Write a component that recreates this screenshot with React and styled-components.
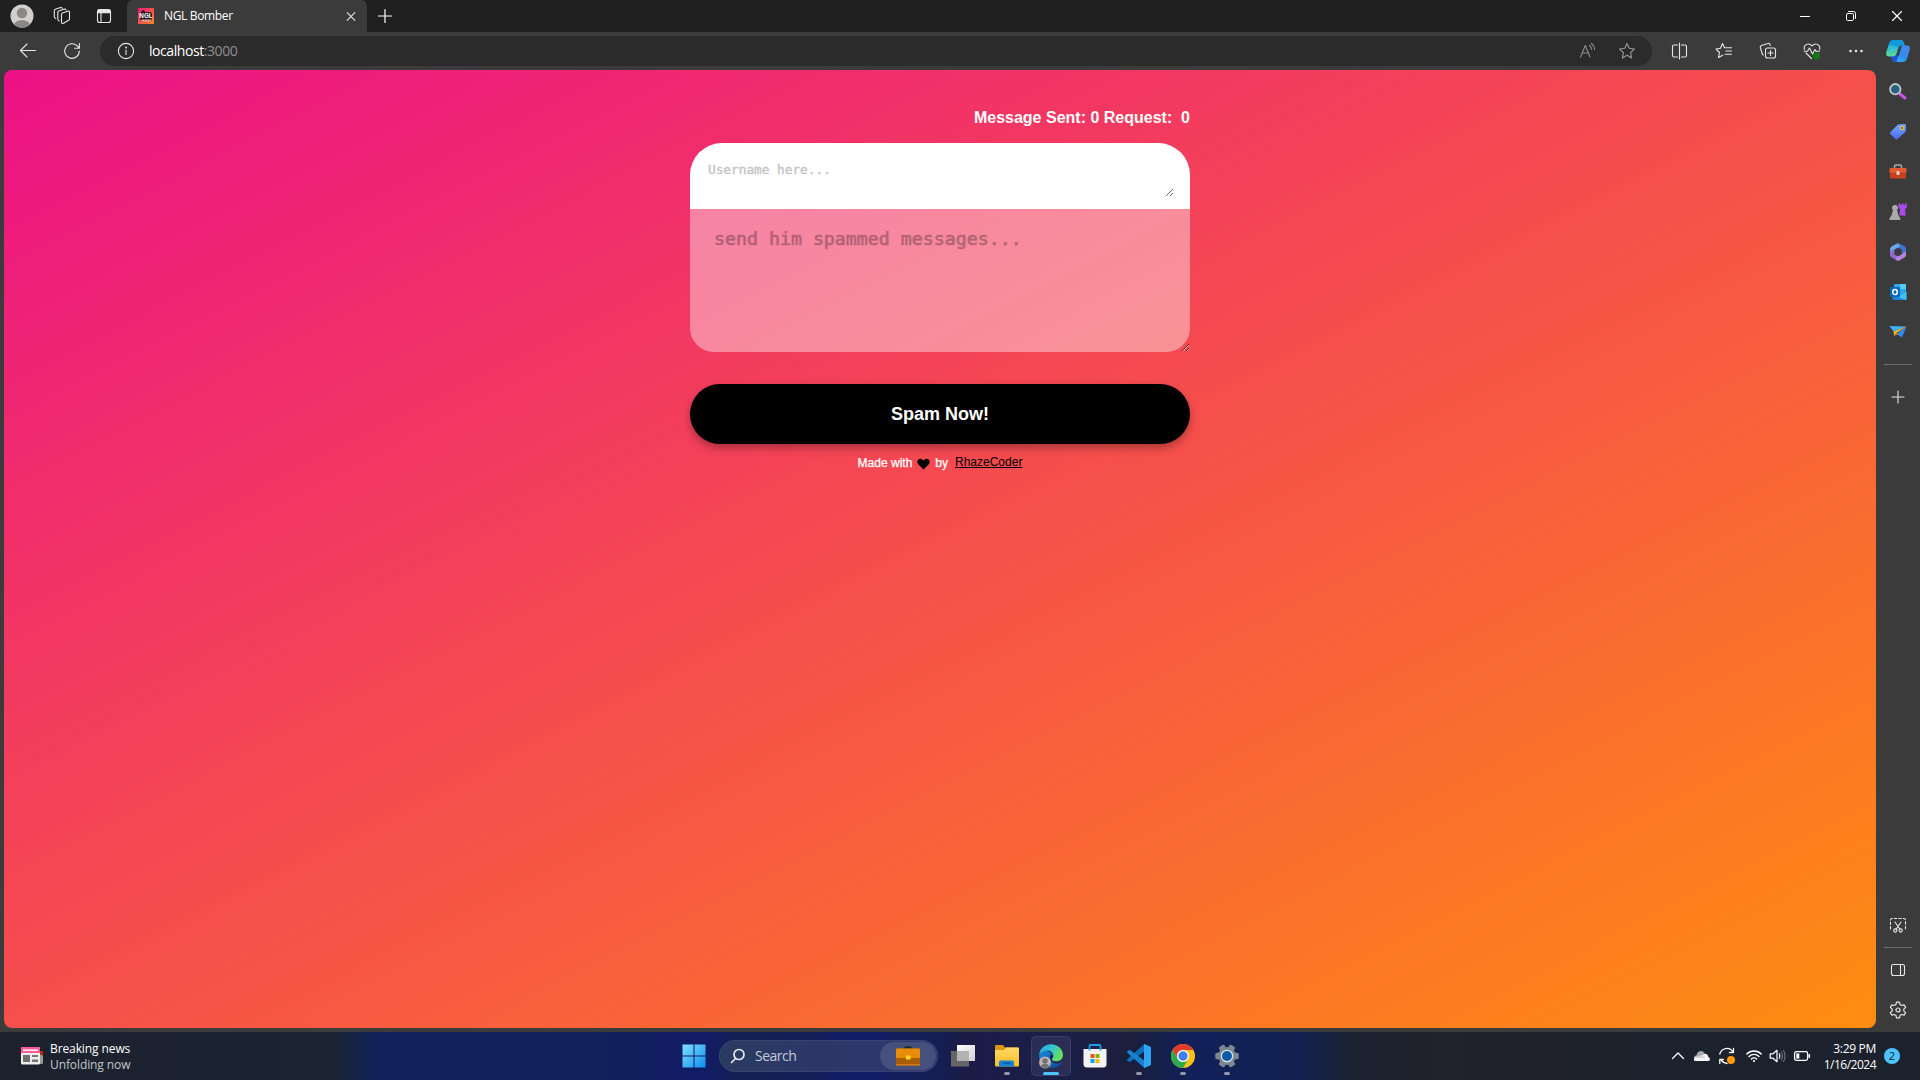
import React from "react";
import styled, { createGlobalStyle } from "styled-components";

const GlobalStyle = createGlobalStyle`
  * { box-sizing: border-box; }
  html, body { margin: 0; padding: 0; background: #3b3b3b; overflow: hidden; }
`;

const Desktop = styled.div`
  width: 1920px;
  height: 1080px;
  display: flex;
  flex-direction: column;
  font-family: "Open Sans", "Noto Sans", sans-serif;
  color: #fff;
  overflow: hidden;
`;

/* ---------- browser chrome ---------- */
const TitleBar = styled.header`
  height: 32px;
  display: flex;
  background: #202020;
`;
const IconSlot = styled.div`
  width: ${(p) => p.$w}px;
  height: ${(p) => p.$h || 32}px;
  flex: none;
  display: flex;
  align-items: center;
  justify-content: center;
`;
const Tab = styled.div`
  width: 240px;
  height: 32px;
  display: flex;
  align-items: center;
  padding: 0 8px 0 11px;
  background: #3b3b3b;
  border-radius: 6px 6px 0 0;
`;
const TabTitle = styled.span`
  flex: 1;
  margin-left: 10px;
  font-size: 12px;
  line-height: 16px;
  letter-spacing: -0.35px;
`;
const Spacer = styled.div`
  flex: 1;
`;
const Toolbar = styled.div`
  height: 38px;
  display: flex;
  align-items: center;
  background: #3b3b3b;
`;
const AddressBar = styled.div`
  width: 1552px;
  height: 30px;
  display: flex;
  align-items: center;
  padding: 0 5px 0 6px;
  border-radius: 15px;
  background: #2b2b2b;
`;
const Url = styled.span`
  flex: 1;
  margin-left: 3px;
  font-size: 14px;
  line-height: 20px;
  letter-spacing: -0.43px;
  color: #fff;
`;
const Port = styled.span`
  color: #8f8f8f;
`;
const Middle = styled.div`
  height: 962px;
  display: flex;
  padding: 0 0 4px 4px;
  background: #3b3b3b;
`;
const SideBar = styled.aside`
  width: 44px;
  display: flex;
  flex-direction: column;
  align-items: center;
  padding-top: 2px;
  margin-bottom: -2px;
`;
const Rule = styled.div`
  width: 28px;
  height: 1px;
  flex: none;
  margin: ${(p) => p.$m};
  background: #6c6c6c;
`;

/* ---------- page ---------- */
const Page = styled.main`
  width: 1872px;
  height: 958px;
  display: flex;
  flex-direction: column;
  align-items: center;
  border-radius: 8px;
  background: linear-gradient(to bottom right, #ec1187 0%, #ff8d10 100%);
  font-family: "Liberation Sans", Arial, sans-serif;
`;
const Column = styled.div`
  width: 500px;
  display: flex;
  flex-direction: column;
`;
const Counters = styled.div`
  height: 73px;
  padding-top: 38px;
  text-align: right;
  font-size: 16px;
  line-height: 20px;
  font-weight: 700;
  white-space: pre;
`;
const UserBox = styled.div`
  height: 66px;
  padding: 16px;
  border-radius: 32px 32px 0 0;
  background: #fff;
`;
const Field = styled.textarea`
  display: block;
  width: 100%;
  border: none;
  outline: none;
  background: transparent;
  font-family: "DejaVu Sans Mono", monospace;
`;
const UserField = styled(Field)`
  height: 38px;
  padding: 3px 2px 2px;
  font-size: 12.75px;
  line-height: 16px;
  -webkit-text-stroke: 0.35px #c4c4c4;
  &::placeholder { color: #c4c4c4; }
`;
const MessageField = styled(Field)`
  height: 143px;
  padding: 18px 24px;
  font-size: 18.25px;
  line-height: 24px;
  border-radius: 0 0 24px 24px;
  background: rgba(255, 255, 255, 0.4);
  &::placeholder {
    color: #000;
    opacity: 0.27;
    -webkit-text-stroke: 0.7px #000;
  }
`;
const SpamButton = styled.button`
  height: 60px;
  margin-top: 32px;
  border: none;
  border-radius: 30px;
  background: #000;
  color: #fff;
  font: 700 18px "Liberation Sans", Arial, sans-serif;
  box-shadow: 0 4px 8px rgba(0, 0, 0, 0.3);
`;
const Credit = styled.div`
  display: flex;
  justify-content: center;
  align-items: center;
  height: 16px;
  margin-top: 11px;
  font-size: 12px;
  line-height: 16px;
  -webkit-text-stroke: 0.25px currentColor;
`;
const Heart = styled.svg`
  margin: 1px 5px 0 5px;
`;
const Author = styled.a`
  margin: -2px 0 0 7px;
  color: #000;
  text-decoration: underline;
  -webkit-text-stroke: 0;
`;

/* ---------- taskbar ---------- */
const TaskBar = styled.footer`
  height: 48px;
  display: grid;
  grid-template-columns: 672px 577px 1fr;
  background: linear-gradient(
    90deg,
    #1c212d 0, #1b2431 330px, #11235a 378px, #11215a 600px, #121b66 700px,
    #122052 745px, #121f55 800px, #111d68 860px, #141e55 930px, #1b1b46 970px,
    #1a1f4a 1050px, #1b1e3c 1130px, #11205a 1190px, #11204f 1300px,
    #1b2230 1355px, #20222c 1440px, #1b212d 1700px
  );
`;
const News = styled.div`
  display: flex;
  align-items: center;
  padding-left: 20px;
`;
const NewsText = styled.div`
  margin-left: 6px;
  padding-top: 2px;
  font-size: 12px;
  line-height: 16px;
  letter-spacing: -0.1px;
`;
const Dim = styled.div`
  color: #c3c6cb;
`;
const Apps = styled.nav`
  display: flex;
  align-items: center;
`;
const AppSlot = styled.div`
  width: ${(p) => p.$w || 44}px;
  height: 48px;
  flex: none;
  display: flex;
  align-items: center;
  justify-content: center;
  position: relative;
`;
const ActivePlate = styled.div`
  width: 40px;
  height: 40px;
  display: flex;
  align-items: center;
  justify-content: center;
  border-radius: 5px;
  border: 1px solid rgba(255, 255, 255, 0.08);
  background: rgba(255, 255, 255, 0.07);
`;
const Running = styled.i`
  position: absolute;
  bottom: 5px;
  width: ${(p) => (p.$active ? 16 : 6)}px;
  height: 3px;
  border-radius: 2px;
  background: ${(p) => (p.$active ? "#4cc2ff" : "#9497a8")};
`;
const SearchBox = styled.div`
  width: 219px;
  height: 32px;
  flex: none;
  display: flex;
  align-items: center;
  margin: 0 3px 0 3px;
  padding: 0 1px 0 10px;
  border-radius: 16px;
  border: 1px solid rgba(255, 255, 255, 0.06);
  background: linear-gradient(90deg, #2a3b60, #2c3768 45%, #30376f);
`;
const SearchLabel = styled.span`
  flex: 1;
  margin-left: 9px;
  font-size: 14px;
  line-height: 20px;
  letter-spacing: -0.5px;
  color: #c5cad8;
`;
const SearchHighlight = styled.div`
  width: 56px;
  height: 28px;
  display: flex;
  align-items: center;
  justify-content: center;
  border-radius: 14px;
  background: #46507c;
`;
const Tray = styled.div`
  display: flex;
  align-items: center;
  justify-content: flex-end;
  padding-right: 20px;
`;
const Clock = styled.div`
  width: 62px;
  padding-top: 1px;
  text-align: right;
  font-size: 12px;
  line-height: 16px;
  letter-spacing: ${(p) => p.$track || -0.3}px;
  white-space: nowrap;
`;
const DateLine = styled.div`
  letter-spacing: -0.5px;
`;
const Badge = styled.div`
  width: 16px;
  height: 16px;
  margin-left: 8px;
  border-radius: 50%;
  background: #4cc2ff;
  color: #10202c;
  font-size: 11px;
  line-height: 16px;
  text-align: center;
`;

/* ---------- drawings ---------- */
const Line = ({ s = 20, c = "#e6e6e6", w = 1.1, children }) => (
  <svg width={s} height={s} viewBox={`0 0 ${s} ${s}`} fill="none" stroke={c} strokeWidth={w} strokeLinecap="round" strokeLinejoin="round">
    {children}
  </svg>
);
const Art = ({ w = 20, h = 20, children }) => (
  <svg width={w} height={h} viewBox={`0 0 ${w} ${h}`}>{children}</svg>
);

const Avatar = () => (
  <Art w={24} h={24}>
    <clipPath id="av"><circle cx="12" cy="12" r="11.5" /></clipPath>
    <circle cx="12" cy="12" r="11.5" fill="#d2d0ce" />
    <g clipPath="url(#av)" fill="#8b8886">
      <circle cx="12" cy="9" r="5.2" />
      <ellipse cx="12" cy="21.5" rx="8" ry="5.6" />
    </g>
  </Art>
);
const Workspaces = () => (
  <Line s={20}>
    <path d="M9.500 8.300Q9.500 7.300 10.400 7L15.800 5.200Q17.500 4.800 17.500 6.300V12.800Q17.500 13.800 16.600 14.200L11.500 17.300Q9.500 18 9.500 16.200z" />
    <path d="M7.300 15Q5.800 14.500 5.800 13V6.500Q5.800 5.300 6.900 4.900L12.500 3.100Q13.700 2.900 14 3.900" />
    <path d="M3.700 12.500Q2.300 12 2.300 10.500V5Q2.300 3.600 3.400 3.200L8.500 1.600Q9.700 1.400 10.200 2.300" />
  </Line>
);
const TabActions = () => (
  <Line s={20}>
    <rect x="3.500" y="3.500" width="13" height="13" rx="2" />
    <path d="M4 5.500h12" strokeWidth="3.500" strokeLinecap="butt" />
    <path d="M7 7v9" />
  </Line>
);
const Favicon = () => (
  <svg width="16" height="16" viewBox="0 0 16 16">
    <defs>
      <linearGradient id="fv" x1="0" y1="0" x2="1" y2="1">
        <stop offset="0" stopColor="#ec1b7c" />
        <stop offset="1" stopColor="#f98320" />
      </linearGradient>
    </defs>
    <rect width="16" height="16" fill="url(#fv)" />
    <path d="M2 5 5 2h1l1 2h6l1 2v4l-1 3H3L2 10z" fill="#2c1520" />
    <text x="8" y="9.800" textAnchor="middle" fontFamily="Liberation Sans, sans-serif" fontWeight="700" fontSize="6.300" fill="#fff">NGL</text>
    <path d="M3.500 12.300h9.500" stroke="#f5d9d4" strokeWidth="1.800" strokeDasharray="1.200 .4" />
  </svg>
);
const starPath = "M10 2.600 12.200 7.300 17.400 8 13.600 11.600 14.600 16.900 10 14.300 5.400 16.900 6.400 11.600 2.600 8 7.800 7.300z";
const Copilot = () => (
  <Art w={26} h={24}>
    <defs>
      <linearGradient id="cpA" x1="0" y1="0" x2="0" y2="1">
        <stop offset="0" stopColor="#12a4e6" /><stop offset=".5" stopColor="#2fc0cf" /><stop offset="1" stopColor="#62dd8c" />
      </linearGradient>
      <linearGradient id="cpB" x1="1" y1="0" x2="0" y2="1">
        <stop offset="0" stopColor="#4a86e8" /><stop offset=".5" stopColor="#2f8df0" /><stop offset="1" stopColor="#27c3f3" />
      </linearGradient>
    </defs>
    <path d="M8.500 1h7.500q2 0 3 3l.6 2.500H16q-2 0-2.700 2.500L11.500 15q-.7 2.500-3 2.500H4q-3.500 0-2.800-4L4 4.500Q5 1 8.500 1z" fill="url(#cpA)" />
    <path d="M8.500 1h7.500q2 0 3 3l.6 2.500H16q-2 0-2.700 2.500l-1-1.500L7 6q-2 0-3.500 1L4.300 4Q5.300 1 8.500 1z" fill="#109ade" />
    <path d="M17.500 23H10q-2 0-3-3l-.6-2.500H8.500q2.300 0 3-2.500l1.800-6q.7-2.500 2.700-2.500h6q3.500 0 2.800 4L22 19.500Q21 23 17.500 23z" fill="url(#cpB)" />
    <path d="M11.500 15l1.800-6q.7-2.500 2.700-2.500h1L13.800 17.500H9.500q1.500-.6 2-2.500z" fill="#3a4450" />
    <path d="M6.400 17.500h2.100q2.300 0 3-2.500l1.500 2.500-1.500 5.500H10q-2 0-3-3z" fill="#2153d8" />
  </Art>
);

const Lens = () => (
  <Art>
    <path d="M12 12l5 4" stroke="#c852ea" strokeWidth="3" strokeLinecap="round" />
    <circle cx="7.300" cy="7.200" r="5.200" fill="#28617f" stroke="#c3c7ca" strokeWidth="1.800" />
  </Art>
);
const Tag = () => (
  <Art>
    <defs><linearGradient id="tg" x1="0" y1="0" x2="0" y2="1"><stop offset="0" stopColor="#74a7ff" /><stop offset="1" stopColor="#4a6af4" /></linearGradient></defs>
    <path d="M10 2.500 16.500 2q1.500 0 1.500 1.500L17.800 9.500 9.500 17q-1 1-2 0L2.500 12q-1-1 0-2z" fill="url(#tg)" />
    <circle cx="14" cy="6" r="1.700" fill="#3a55a8" stroke="#f5c82a" strokeWidth="1.300" />
  </Art>
);
const Toolbox = () => (
  <Art>
    <path d="M6.500 7V4.500q0-1.500 1.500-1.500h4q1.500 0 1.500 1.500V7" fill="none" stroke="#a5a8aa" strokeWidth="1.500" />
    <rect x="1.500" y="6" width="17" height="5" rx="1" fill="#e65a2f" />
    <rect x="2" y="10.500" width="16" height="6" rx="1" fill="#c9401f" />
    <rect x="8.500" y="9" width="3" height="4" rx="1" fill="#d7dadb" />
  </Art>
);
const Chess = () => (
  <Art>
    <path d="M10.500 1.500h2V3h1.300V1.500h1.800V3h1.300V1.500h1.900v4l-1.800 1.500.8 6.500H11.500L12 7 10.500 5.500z" fill="#a94bea" />
    <path d="M7 3a2.800 2.800 0 0 1 2 5l1.500 5.500 1.700 2.500v2H1.500v-2l2-2.500L5 8a2.800 2.800 0 0 1 2-5z" fill="#a9a9a9" />
  </Art>
);
const M365 = () => (
  <Art>
    <path d="M9.500 1.300Q10.500 1 11.500 1.500L16.500 4.300Q18 5 18 6.500V11L13.500 13V7.500L8 4.500z" fill="#3d72d2" />
    <path d="M9.500 1.300 3.500 4.500Q2 5.500 2 7V13L6.500 11V7.500L12.500 4.300z" fill="#6aa9e6" />
    <path d="M2 9V13Q2 14.500 3.300 15.300L8.500 18.300Q10 19 11.500 18.200L14 16.500 6.500 12.500V7.500z" fill="#8d6bd0" />
    <path d="M18 9V13.500Q18 14.500 16.800 15.300L11.500 18.300Q10 19 8.500 18.300L7.500 15.500 13.500 12.500z" fill="#b683de" />
    <path d="M6.500 7.800 10 6l3.500 1.800v4.400L10 14l-3.500-1.800z" fill="#3b3b3b" />
  </Art>
);
const Outlook = () => (
  <Art>
    <rect x="6" y="2" width="12" height="14" rx="1" fill="#2fa8ea" />
    <rect x="12" y="2" width="6" height="5" fill="#52cdf6" />
    <path d="M4.500 9.500 12 13.500 18.500 9.500V17q0 1-1 1h-12q-1 0-1-1z" fill="#1a86d8" />
    <path d="M18.500 9.500 10 15l7.500 3q1 0 1-1z" fill="#44bdf0" />
    <rect x="2" y="5" width="10" height="10" rx="1.200" fill="#0a66b8" />
    <ellipse cx="7" cy="10" rx="2.300" ry="2.600" fill="none" stroke="#fff" strokeWidth="1.500" />
  </Art>
);
const Plane = () => (
  <Art>
    <path d="M1.500 4 18.500 4.500 5.500 9.500z" fill="#3fb0f5" />
    <path d="M18.500 4.500 14 15.500 8.500 12z" fill="#2d8cf0" />
    <path d="M18.500 4.500 5.500 9.500 6 14 8.500 11z" fill="#f4b62a" />
    <path d="M6 14 8.500 11l1.800 1.300z" fill="#c98210" />
  </Art>
);
const GearLine = () => (
  <Line w={1.200}>
    <path d="M8.500 2.200h3l.6 2.400 1.600.9 2.400-.7 1.500 2.600-1.800 1.700v1.800l1.800 1.700-1.500 2.600-2.400-.7-1.600.9-.6 2.400h-3l-.6-2.400-1.600-.9-2.400.7-1.500-2.600 1.800-1.700V9.100L2.400 7.400l1.500-2.600 2.400.7 1.600-.9z" />
    <circle cx="10" cy="10" r="2" />
  </Line>
);

const NewsIcon = () => (
  <Art w={24} h={18}>
    <rect x="17" y="4" width="6" height="6" fill="#a6330f" /><rect x="17" y="8" width="6" height="9" rx="1.500" fill="#9b9b9b" />
    <rect x="1" y="0" width="19" height="17.500" rx="1.500" fill="#ededed" />
    <path d="M1 6V1.500Q1 0 2.500 0h16Q20 0 20 1.500V6z" fill="#f75a94" />
    <rect x="3" y="2.300" width="15" height="1.800" fill="#ffe1ec" />
    <rect x="3" y="8" width="7" height="7" fill="#6e6e6e" />
    <rect x="12" y="8" width="6" height="2" fill="#777" /><rect x="12" y="12.500" width="6" height="2.500" fill="#777" />
  </Art>
);
const Windows = () => (
  <Art w={24} h={24}>
    <defs><linearGradient id="wn" x1="0" y1="0" x2="1" y2="1"><stop offset="0" stopColor="#7fe0ff" /><stop offset="1" stopColor="#0c8fee" /></linearGradient></defs>
    <path d="M0.500.5h11v11h-11zM12.500.5h11v11h-11zM.5 12.500h11v11h-11zM12.500 12.500h11v11h-11z" fill="url(#wn)" />
  </Art>
);
const Briefcase = () => (
  <Art w={24} h={20}>
    <path d="M8 3q0-2.500 2-2.500h4q2 0 2 2.500" fill="#20242c" stroke="#343842" />
    <rect x="0" y="2.500" width="24" height="17" rx="1.200" fill="#a95c06" />
    <rect x="0" y="2.500" width="24" height="9.500" rx="1.200" fill="#e88d09" />
    <rect x="10" y="9.500" width="4.500" height="4" fill="#ffd91c" />
    <rect y="18" width="24" height="1.500" fill="#cf7a12" />
  </Art>
);
const TaskView = () => (
  <Art w={26} h={24}>
    <defs><linearGradient id="tv" x1="0" y1="0" x2="1" y2="1"><stop offset="0" stopColor="#fff" /><stop offset="1" stopColor="#d0d0d0" /></linearGradient></defs>
    <rect x="1" y="7" width="18" height="15.500" fill="#666" />
    <rect x="7" y="1" width="18" height="16" rx=".5" fill="url(#tv)" />
    <rect x="7" y="7" width="12" height="10" fill="#b2b2b2" />
  </Art>
);
const Explorer = () => (
  <Art w={24} h={24}>
    <defs><linearGradient id="fe" x1="0" y1="0" x2="0" y2="1"><stop offset="0" stopColor="#ffd968" /><stop offset="1" stopColor="#fdbd21" /></linearGradient></defs>
    <path d="M0 2q0-1 1-1h7l2 2.500h13v6H0z" fill="#d9980c" />
    <path d="M0 6h9l2-2.500h12q1 0 1 1V21.500q0 1-1 1H1q-1 0-1-1z" fill="url(#fe)" />
    <path d="M4 22.500V18q0-1.500 1.500-1.500h12Q19 16.500 19 18v4.500z" fill="#1582d6" />
    <rect x="8" y="18.500" width="7.500" height="1.500" fill="#0a5ca8" />
  </Art>
);
const EdgeIcon = () => (
  <Art w={26} h={26}>
    <defs>
      <linearGradient id="eg1" x1="0" y1="0" x2="1" y2=".4"><stop offset="0" stopColor="#2aa8e8" /><stop offset=".55" stopColor="#34c6d2" /><stop offset="1" stopColor="#66e05a" /></linearGradient>
      <linearGradient id="eg2" x1="0" y1="0" x2="1" y2="1"><stop offset="0" stopColor="#1b88d8" /><stop offset="1" stopColor="#0d4a9c" /></linearGradient>
    </defs>
    <path d="M1.200 12Q3 7.500 9.300 7.500L15 11l-3 5 4 4.500q4.500 1 8-1-4 5.300-11 5.300A11.800 11.800 0 0 1 1.200 12z" fill="url(#eg2)" />
    <path d="M1.200 12C1.500 5.500 7 1.200 13 1.200c7 0 12 5.300 12 10.800 0 4-3 6.200-6.500 6.200-2.800 0-4.700-1-4.700-2 0-.8 1.500-1.500 1.500-3.700 0-3-2.800-5-6-5C5.500 7.500 2.500 9 1.200 12z" fill="url(#eg1)" />
    <path d="M12.300 11.500Q14 11 15.300 12.500c0 2.200-1.500 2.900-1.500 3.700l.7 3.300q-3.500-2.500-2.200-8z" fill="#1c2850" />
    <circle cx="7" cy="19.500" r="5.900" fill="#bab8b6" />
    <circle cx="7" cy="18" r="2.700" fill="#73706e" /><path d="M3 23.500q0-2.700 4-2.700t4 2.700q-4 3-8 0z" fill="#73706e" />
  </Art>
);
const Store = () => (
  <Art w={24} h={24}>
    <path d="M6.500 7V2q0-1 1-1h9q1 0 1 1v5" fill="none" stroke="#1f9ce6" strokeWidth="1.800" />
    <path d="M.5 5h23v15q0 3.500-3.500 3.500H4Q.5 23.500.5 20z" fill="#f3f3f3" />
    <path d="M6.500 5v1.500M17.500 5v1.500" stroke="#1f9ce6" strokeWidth="1.800" />
    <rect x="7.500" y="10" width="4" height="4" fill="#f25022" /><rect x="12.500" y="10" width="4" height="4" fill="#7fba00" />
    <rect x="7.500" y="15" width="4" height="4" fill="#00a4ef" /><rect x="12.500" y="15" width="4" height="4" fill="#ffb900" />
  </Art>
);
const VSCode = () => (
  <Art w={24} h={24}>
    <path d="M17.500 0 18 7 2.500 18.300 0 16.200V15.500z" fill="#0d6fb8" />
    <path d="M17.500 24 18 17 2.500 5.700 0 7.800V8.500z" fill="#1583d0" />
    <path d="M17.500 0 24 3V21l-6.500 3q-.8-.2-.5-1V1q-.3-.8.500-1z" fill="#2ea5f2" />
  </Art>
);
const Chrome = () => (
  <Art w={24} h={24}>
    <circle cx="12" cy="12" r="12" fill="#fbc116" />
    <path d="M1.600 6A12 12 0 0 1 22.400 6H12a6 6 0 0 0-5.200 9z" fill="#e33b2e" />
    <path d="M1.600 6A12 12 0 0 0 12 24l5.200-9a6 6 0 0 1-10.400 0z" fill="#2da94f" />
    <circle cx="12" cy="12" r="6" fill="#fff" /><circle cx="12" cy="12" r="4.700" fill="#3f7ff0" />
  </Art>
);
const SettingsIcon = () => (
  <Art w={24} h={24}>
    <g fill="#7c8791">
      {[30, 90, 150].map((a) => (
        <rect key={a} x="8.800" y="0.300" width="6.400" height="23.400" rx="1.500" transform={`rotate(${a} 12 12)`} />
      ))}
      <circle cx="12" cy="12" r="9" />
    </g>
    <circle cx="12" cy="12" r="6.300" fill="#d9e0e6" /><circle cx="12" cy="12" r="5" fill="#0d5ba8" />
  </Art>
);

const Cloud = () => (
  <Art w={18} h={14}>
    <path d="M1 9Q1 6.500 3.500 6.200 4.500 2 8 2q3 0 4 3.500L8 9z" fill="#a9abae" />
    <path d="M2 12Q0 11 1.500 8.500L9 6.500l3-1.700Q15 5 15.300 8q2 .5 1.700 2.500-.3 1.500-2 1.500H4z" fill="#f8f8f8" />
    <path d="M2 9.200 8.800 6 13 9z" fill="#d3d4d6" />
  </Art>
);
const Sync = () => (
  <Line s={18} c="#fff" w={1.300}>
    <path d="M1.800 7A7.200 7.200 0 0 1 15 5M15.500 1.500V5.500H11.500M9 16.500A7.200 7.200 0 0 1 3.500 13.500M1.800 16.500V12.500H5.500" />
    <circle cx="13" cy="13" r="4" fill="#ff9a0c" stroke="none" />
  </Line>
);
const Wifi = () => (
  <Line s={18} c="#fff" w={1.400}>
    <path d="M1.800 7a10 10 0 0 1 14.400 0M4 9.500a7 7 0 0 1 10 0M6.300 12a3.800 3.800 0 0 1 5.400 0" />
    <circle cx="9" cy="14" r="1.100" fill="#fff" stroke="none" />
  </Line>
);
const Speaker = () => (
  <Line s={18} c="#fff" w={1.200}>
    <path d="M1.200 6.800H4L8 3.300V14.700L4 11.200H1.200z" />
    <path d="M10.300 6.800q1.300 2.200 0 4.400" />
    <path d="M12.300 5q2.400 4 0 8M14.500 3.500q3 5.500 0 11" stroke="#6b7079" />
  </Line>
);
const Battery = () => (
  <Line s={18} c="#fff" w={1.300}>
    <rect x="1.600" y="4.600" width="13" height="8.800" rx="1.800" />
    <path d="M16.300 7.800v2.400" strokeWidth="1.600" /><rect x="3.300" y="6.400" width="3" height="5.200" fill="#fff" stroke="none" />
  </Line>
);

export default function App() {
  return (
    <Desktop>
      <GlobalStyle />
      <TitleBar>
        <IconSlot $w={44}><Avatar /></IconSlot>
        <IconSlot $w={36}><Workspaces /></IconSlot>
        <IconSlot $w={47}><TabActions /></IconSlot>
        <Tab>
          <Favicon />
          <TabTitle>NGL Bomber</TabTitle>
          <Line s={16}><path d="M4.200 4.700l7.600 7.600M11.800 4.700l-7.600 7.600" /></Line>
        </Tab>
        <IconSlot $w={35}><Line s={16} c="#fff" w={1.200}><path d="M1.500 8h13M8 1.500v13" /></Line></IconSlot>
        <Spacer />
        <IconSlot $w={46}><Line s={12} c="#fff" w={1}><path d="M1.500 6.500h9" /></Line></IconSlot>
        <IconSlot $w={46}>
          <Line s={12} c="#fff" w={1}><rect x="1.500" y="3.500" width="7" height="7" rx="1.200" /><path d="M3.500 1.500h5q2 0 2 2v5" /></Line>
        </IconSlot>
        <IconSlot $w={46}><Line s={12} c="#fff" w={1.100}><path d="M1.500 1.500l9 9M10.500 1.500l-9 9" /></Line></IconSlot>
      </TitleBar>

      <Toolbar>
        <IconSlot $w={56}><Line><path d="M17.500 9.500H2.500M9 3 2.500 9.500 9 16" /></Line></IconSlot>
        <IconSlot $w={32}>
          <Line><path d="M17.300 10A7.300 7.300 0 1 1 15 4.700L17.200 7M17.400 2.500V7.200H12.700" /></Line>
        </IconSlot>
        <IconSlot $w={12} />
        <AddressBar>
          <IconSlot $w={40}>
            <Line><circle cx="10" cy="10" r="7.600" /><path d="M10 9v4.500" /><circle cx="10" cy="6.500" r=".4" /></Line>
          </IconSlot>
          <Url>localhost<Port>:3000</Port></Url>
          <IconSlot $w={40}>
            <Line c="#8d8d8d"><path d="M3.500 16 8.300 4.500 13 16M5.300 12h6M12.500 4.500q2 1.500 2 4M14.500 2.500q3 2.500 3 6" /></Line>
          </IconSlot>
          <IconSlot $w={40}><Line c="#9a9a9a"><path d={starPath} /></Line></IconSlot>
        </AddressBar>
        <IconSlot $w={6} />
        <IconSlot $w={44}>
          <Line><path d="M7.500 4H4Q2.500 4 2.500 5.500v9Q2.500 16 4 16H7.500M11.500 4h3.500q1.500 0 1.500 1.500v9q0 1.500-1.500 1.500H11.500M9.500 2v16" /></Line>
        </IconSlot>
        <IconSlot $w={44}>
          <Line><path d="M10.500 6.800 8.500 2.500 6.500 7.300 2 8 5.500 11.500 4.500 16.500 8.700 14.200M10.500 6.800H17.500M12 10h5.500M11 13.300h6.500" /></Line>
        </IconSlot>
        <IconSlot $w={44}>
          <Line>
            <rect x="7.500" y="7" width="10" height="10" rx="2" /><path d="M12.500 9.500v5M10 12h5" />
            <path d="M5.200 14 4.500 13.500 2.300 6.500Q2 5 3.500 4.500L10 2.500q1.500-.5 2 1l.3 1" />
          </Line>
        </IconSlot>
        <IconSlot $w={44}>
          <Line>
            <path d="M2.300 8.500C1.500 5 4 3 6.300 3 8.500 3 10 5 10 5s1.500-2 3.700-2C16 3 18.500 5 17.700 8.500M4 12l5.500 5.500M2 10.300h3.500L7.500 7l3 6 2.500-4.500 1 1.800h3.500" />
            <circle cx="14.500" cy="15" r="3.600" fill="#107c10" stroke="none" />
          </Line>
        </IconSlot>
        <IconSlot $w={44}>
          <Art><g fill="#e8e8e8"><circle cx="4.500" cy="10" r="1.300" /><circle cx="10" cy="10" r="1.300" /><circle cx="15.500" cy="10" r="1.300" /></g></Art>
        </IconSlot>
        <IconSlot $w={39}><Copilot /></IconSlot>
      </Toolbar>

      <Middle>
        <Page>
          <Column>
            <Counters>{"Message Sent: 0 Request:  0"}</Counters>
            <UserBox><UserField placeholder="Username here..." /></UserBox>
            <MessageField placeholder="send him spammed messages..." />
            <SpamButton>Spam Now!</SpamButton>
            <Credit>
              Made with
              <Heart width="13" height="12" viewBox="0 0 13 12">
                <path d="M6.500 11.500 1.500 6.500C-.8 3.800.8.700 3.300.700 5 .7 6 1.700 6.500 2.700 7 1.700 8 .7 9.700.7c2.500 0 4.100 3.100 1.800 5.800z" fill="#000" />
              </Heart>
              by
              <Author>RhazeCoder</Author>
            </Credit>
          </Column>
        </Page>
        <SideBar>
          {[Lens, Tag, Toolbox, Chess, M365, Outlook, Plane].map((Icon, i) => (
            <IconSlot key={i} $w={40} $h={40}><Icon /></IconSlot>
          ))}
          <Rule $m="12px 0 12px" />
          <IconSlot $w={40} $h={40}><Line s={16}><path d="M2 8h12M8 2v12" /></Line></IconSlot>
          <Spacer />
          <IconSlot $w={40} $h={40}>
            <Line>
              <path d="M2.500 14V5q0-1.500 1.500-1.500h12q1.500 0 1.500 1.500v9" strokeDasharray="2.500 2" />
              <path d="M7 7l5 7.500M13 7l-5 7.500" /><circle cx="7.300" cy="15.500" r="1.600" /><circle cx="12.700" cy="15.500" r="1.600" />
            </Line>
          </IconSlot>
          <Rule $m="2px 0 2px" />
          <IconSlot $w={40} $h={40}><Line><rect x="3.500" y="4.500" width="13" height="11" rx="2" /><path d="M12.500 4.500v11" /></Line></IconSlot>
          <IconSlot $w={40} $h={40}><GearLine /></IconSlot>
        </SideBar>
      </Middle>

      <TaskBar>
        <News>
          <NewsIcon />
          <NewsText><div>Breaking news</div><Dim>Unfolding now</Dim></NewsText>
        </News>
        <Apps>
          <AppSlot $w={44}><Windows /></AppSlot>
          <SearchBox>
            <Line s={16} c="#e4e7ee" w={1.700}><circle cx="9" cy="6.500" r="5" /><path d="M5.500 10.500 1.500 14.500" /></Line>
            <SearchLabel>Search</SearchLabel>
            <SearchHighlight><Briefcase /></SearchHighlight>
          </SearchBox>
          <AppSlot><TaskView /></AppSlot>
          <AppSlot><Explorer /><Running /></AppSlot>
          <AppSlot><ActivePlate><EdgeIcon /></ActivePlate><Running $active /></AppSlot>
          <AppSlot><Store /></AppSlot>
          <AppSlot><VSCode /><Running /></AppSlot>
          <AppSlot><Chrome /><Running /></AppSlot>
          <AppSlot><SettingsIcon /><Running /></AppSlot>
        </Apps>
        <Tray>
          <IconSlot $w={24}><Line s={14} c="#fff" w={1.300}><path d="M1.500 9.500 7 4l5.500 5.500" /></Line></IconSlot>
          <IconSlot $w={24}><Cloud /></IconSlot>
          <IconSlot $w={25}><Sync /></IconSlot>
          <IconSlot $w={3} />
          <IconSlot $w={24}><Wifi /></IconSlot>
          <IconSlot $w={24}><Speaker /></IconSlot>
          <IconSlot $w={24}><Battery /></IconSlot>
          <Clock><div>3:29 PM</div><DateLine>1/16/2024</DateLine></Clock>
          <Badge>2</Badge>
        </Tray>
      </TaskBar>
    </Desktop>
  );
}
